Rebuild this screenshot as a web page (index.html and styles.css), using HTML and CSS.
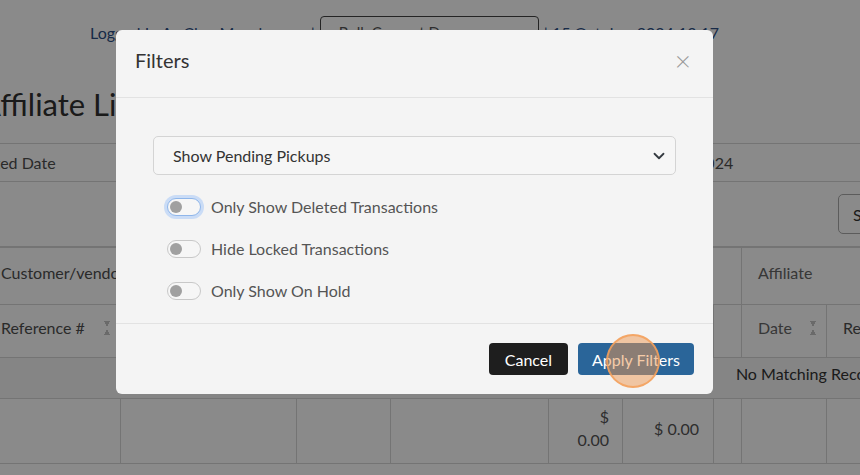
FILE: index.html
```html
<!DOCTYPE html>
<html lang="en">
<head>
    <meta charset="UTF-8">
    <meta name="viewport" content="width=device-width, initial-scale=1.0">
    <title>Affiliate Linked Orders</title>
    <link rel="stylesheet" href="styles.css">
</head>
<body>
    <div class="page">
        <div class="topbar">
            <span>Logged In As Cleo Macpherson |</span>
            <div class="top-select">Bulk Convert Docs <span class="chev">&#8964;</span></div>
            <span>| 15 October 2024 13:17</span>
        </div>

        <h1 class="page-title">Affiliate Linked Orders</h1>

        <div class="filter-row">
            <span class="filter-label">Created Date</span>
            <span class="date-range">1 October 2024 - 29 October 2024</span>
        </div>

        <div class="action-row">
            <button class="search-btn">Search</button>
        </div>

        <table class="orders">
            <colgroup>
                <col style="width:136px"><col style="width:176px"><col style="width:94px">
                <col style="width:158px"><col style="width:74px"><col style="width:91px">
                <col style="width:28px"><col style="width:85px"><col style="width:130px">
                <col style="width:200px"><col style="width:200px"><col style="width:330px">
            </colgroup>
            <thead>
                <tr class="head-top">
                    <th colspan="7">Customer/vendor</th>
                    <th colspan="5">Affiliate</th>
                </tr>
                <tr class="head-cols">
                    <th class="sort">Reference #</th>
                    <th class="sort">Purchase Order #</th>
                    <th>Name</th>
                    <th class="sort">Supplier Order #</th>
                    <th>Status</th>
                    <th>Total</th>
                    <th></th>
                    <th class="sort">Date</th>
                    <th class="sort">Reference #</th>
                    <th>Name</th>
                    <th>Status</th>
                    <th>Total</th>
                </tr>
            </thead>
            <tbody>
                <tr class="empty-row">
                    <td colspan="12">No Matching Records Found</td>
                </tr>
                <tr class="total-row">
                    <td></td><td></td><td></td><td></td>
                    <td class="money narrow">$ 0.00</td>
                    <td class="money">$ 0.00</td>
                    <td></td><td></td><td></td><td></td><td></td><td></td>
                </tr>
            </tbody>
        </table>
    </div>

    <div class="backdrop"></div>

    <div class="modal">
        <div class="modal-header">
            <h2>Filters</h2>
            <span class="close">&times;</span>
        </div>
        <div class="modal-body">
            <div class="select-box">
                <span>Show Pending Pickups</span>
                <svg class="select-chev" width="12" height="12" viewBox="0 0 16 16"><path d="M2 5l6 6 6-6" fill="none" stroke="#343a40" stroke-width="2.4" stroke-linecap="round" stroke-linejoin="round"/></svg>
            </div>
            <label class="switch-row">
                <span class="switch focused"></span>
                <span>Only Show Deleted Transactions</span>
            </label>
            <label class="switch-row">
                <span class="switch"></span>
                <span>Hide Locked Transactions</span>
            </label>
            <label class="switch-row">
                <span class="switch"></span>
                <span>Only Show On Hold</span>
            </label>
        </div>
        <div class="modal-footer">
            <button class="btn-cancel">Cancel</button>
            <button class="btn-apply">Apply Filters</button>
            <span class="click-dot"></span>
        </div>
    </div>
</body>
</html>
```

FILE: styles.css
```css
body {
    margin: 0;
    font-family: Lato, "Open Sans", sans-serif;
    background-color: #ffffff;
    overflow: hidden;
    height: 475px;
}

.page {
    width: 1700px;
    color: #4e4e4e;
}

.topbar {
    height: 64px;
    display: flex;
    align-items: center;
    gap: 5px;
    padding-left: 90px;
    font-size: 16px;
    color: #2d4f86;
}

.top-select {
    width: 191px;
    height: 30px;
    border: 1px solid #444;
    border-radius: 4px;
    display: flex;
    align-items: center;
    justify-content: space-between;
    padding: 0 8px 0 18px;
    color: #555;
    font-size: 15px;
}

.top-select .chev {
    font-size: 14px;
    color: #555;
}

.page-title {
    margin: 0 0 0 -20px;
    height: 79px;
    line-height: 80px;
    font-size: 31px;
    font-weight: 400;
    color: #303030;
}

.filter-row {
    height: 37px;
    border-top: 1px solid #d6d6d6;
    border-bottom: 1px solid #d6d6d6;
    display: flex;
    align-items: center;
    margin-left: -38px;
    font-size: 16px;
}

.date-range {
    margin-left: 429px;
}

.action-row {
    height: 64px;
    border-bottom: 1px solid #d6d6d6;
    display: flex;
    align-items: center;
    padding-left: 838px;
}

.search-btn {
    height: 40px;
    padding: 0 14px;
    background: #fff;
    border: 1px solid #aaa;
    border-radius: 5px;
    font-family: inherit;
    font-size: 16px;
    color: #333;
}

.orders {
    margin-left: -16px;
    border-collapse: collapse;
    table-layout: fixed;
    width: 1702px;
    font-size: 16px;
}

.orders th,
.orders td {
    border: 1px solid #d6d6d6;
    padding: 0 16px;
    text-align: left;
    font-weight: 400;
    white-space: nowrap;
    overflow: hidden;
}

.head-top th {
    height: 49px;
    padding-bottom: 7px;
    color: #666;
}

.head-top th:first-child {
    color: #4e4e4e;
}

.head-cols th {
    height: 45px;
    padding-bottom: 7px;
    color: #4e4e4e;
}

.head-cols th:nth-child(8) {
    color: #666;
}

.head-cols th.sort {
    position: relative;
}

.head-cols th.sort::after {
    content: "";
    position: absolute;
    right: 10px;
    top: 16px;
    width: 6px;
    height: 14px;
    background:
        linear-gradient(to top right, transparent 50%, #c4c4c4 50%) 0 0 / 3px 6px no-repeat,
        linear-gradient(to top left, transparent 50%, #c4c4c4 50%) 3px 0 / 3px 6px no-repeat,
        linear-gradient(to bottom right, transparent 50%, #c4c4c4 50%) 0 8px / 3px 6px no-repeat,
        linear-gradient(to bottom left, transparent 50%, #c4c4c4 50%) 3px 8px / 3px 6px no-repeat;
}

.empty-row td {
    height: 30px;
    padding-bottom: 10px;
    background-color: #f6f6f6;
    text-align: center;
    color: #333;
}

.total-row td {
    height: 58px;
    padding-bottom: 6px;
}

.orders td.money {
    text-align: right;
    white-space: normal;
    padding: 0 14px 6px 14px;
    color: #555;
    line-height: 23px;
}

.orders td.money.narrow {
    padding: 0 13px 6px 28px;
}

.backdrop {
    position: fixed;
    inset: 0;
    background-color: rgba(0, 0, 0, 0.46);
}

.modal {
    position: fixed;
    left: 116px;
    top: 30px;
    width: 597px;
    height: 364px;
    background-color: #f4f4f4;
    border-radius: 6px;
    display: flex;
    flex-direction: column;
    color: #333;
}

.modal-header {
    border-bottom: 1px solid #e2e2e2;
    display: flex;
    align-items: center;
    justify-content: space-between;
    padding: 0 22px 8px 19px;
    box-sizing: border-box;
    height: 68px;
}

.modal-header h2 {
    margin: 0;
    font-size: 20px;
    font-weight: 400;
    color: #333;
}

.close {
    font-size: 28px;
    font-weight: 300;
    color: #999;
    line-height: 1;
}

.modal-body {
    flex: 1;
    padding: 38px 37px 0 37px;
}

.select-box {
    height: 37px;
    border: 1px solid #d4d4d4;
    border-radius: 5px;
    background-color: #f6f6f6;
    display: flex;
    align-items: center;
    justify-content: space-between;
    padding: 0 10px 0 19px;
    font-size: 16px;
    color: #333;
    margin-bottom: 21px;
}

.switch-row {
    display: flex;
    align-items: center;
    gap: 10px;
    padding-left: 14px;
    height: 21px;
    margin-bottom: 21px;
    font-size: 16px;
    color: #555;
}

.switch {
    width: 32px;
    height: 16px;
    border: 1px solid #c8c8c8;
    border-radius: 9px;
    background-color: #f6f6f6;
    position: relative;
}

.switch::before {
    content: "";
    position: absolute;
    left: 2px;
    top: 2px;
    width: 12px;
    height: 12px;
    border-radius: 50%;
    background-color: #a0a0a0;
}

.switch.focused {
    border-color: #8fb6ea;
    box-shadow: 0 0 0 3px rgba(13, 110, 253, 0.18);
}

.modal-footer {
    height: 70px;
    border-top: 1px solid #e2e2e2;
    display: flex;
    align-items: center;
    justify-content: flex-end;
    gap: 10px;
    padding-right: 19px;
    position: relative;
}

.modal-footer button {
    height: 32px;
    border: none;
    border-radius: 4px;
    font-family: inherit;
    font-size: 16px;
    color: #fff;
    white-space: nowrap;
}

.btn-cancel {
    background-color: #1e1e1e;
    padding: 0 16px;
}

.btn-apply {
    background-color: #2a6599;
    padding: 0 14px;
}

.click-dot {
    position: absolute;
    left: 490px;
    top: 10px;
    width: 50px;
    height: 50px;
    border-radius: 50%;
    background-color: rgba(236, 150, 80, 0.5);
    border: 2px solid rgba(245, 160, 90, 0.85);
}
```
